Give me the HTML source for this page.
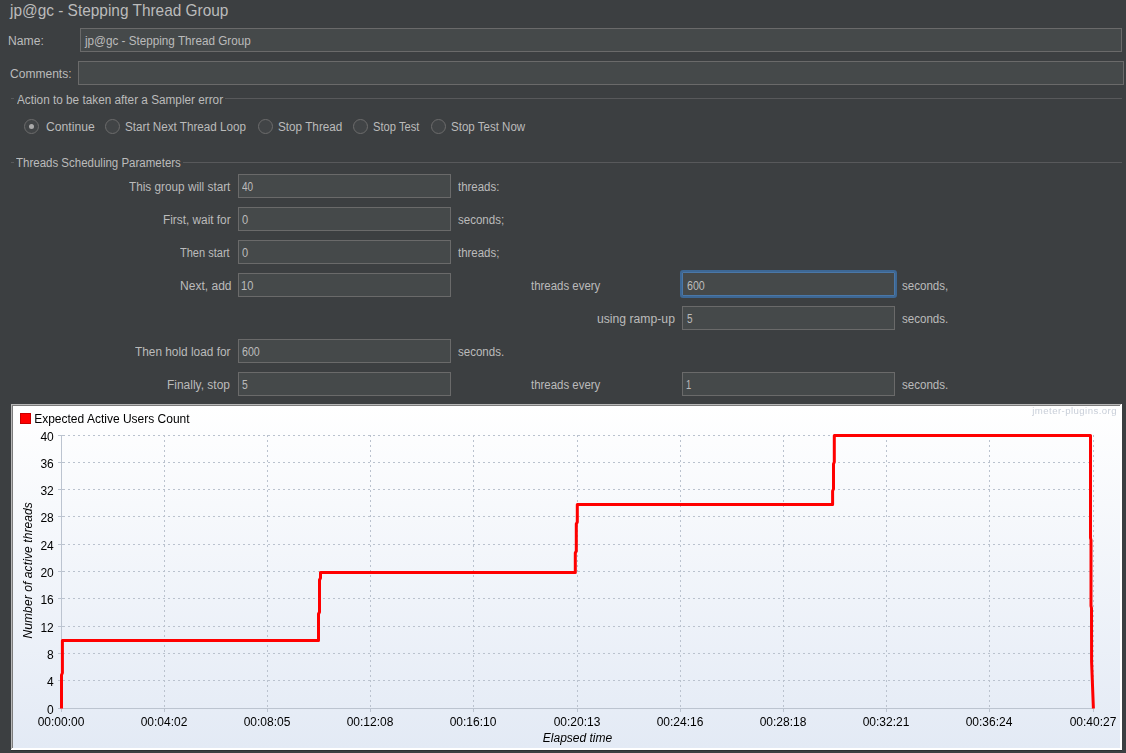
<!DOCTYPE html>
<html><head><meta charset="utf-8">
<style>
html,body{margin:0;padding:0}
body{width:1126px;height:753px;overflow:hidden;position:relative;background:#3c3f41;font-family:"Liberation Sans",sans-serif}
.t{position:absolute;white-space:pre;line-height:normal;transform-origin:0 0}
.fld{position:absolute;box-sizing:border-box;background:#45494a;border:1px solid #6a6a6a}
.foc{position:absolute;box-sizing:border-box;background:#45494a;border:2px solid #3d6794;box-shadow:inset 0 0 0 1px #4a77a7;border-radius:3px}
.ln{position:absolute;height:1px;background:#58595b}
.rad{position:absolute;box-sizing:border-box;width:15px;height:15px;border-radius:50%;border:1px solid #6c6c6c;background:#414446}
.dot{position:absolute;width:5px;height:5px;border-radius:50%;background:#ababab}
</style></head><body>
<div class="fld" style="left:80px;top:28px;width:1042px;height:24px"></div>
<div class="fld" style="left:78px;top:61px;width:1046px;height:24px"></div>
<div class="ln" style="left:11px;top:98px;width:3px"></div>
<div class="ln" style="left:225px;top:98px;width:897px"></div>
<div class="rad" style="left:24.1px;top:118.9px"></div>
<div class="dot" style="left:29.1px;top:123.9px"></div>
<div class="rad" style="left:105.0px;top:118.9px"></div>
<div class="rad" style="left:258.0px;top:118.9px"></div>
<div class="rad" style="left:352.7px;top:118.9px"></div>
<div class="rad" style="left:431.0px;top:118.9px"></div>
<div class="ln" style="left:11px;top:162px;width:3px"></div>
<div class="ln" style="left:183px;top:162px;width:939px"></div>
<div class="fld" style="left:238px;top:174px;width:213px;height:24px"></div>
<div class="fld" style="left:238px;top:207px;width:213px;height:24px"></div>
<div class="fld" style="left:238px;top:240px;width:213px;height:24px"></div>
<div class="fld" style="left:238px;top:273px;width:213px;height:24px"></div>
<div class="foc" style="left:680px;top:270px;width:217px;height:28px"></div>
<div class="fld" style="left:682px;top:306px;width:213px;height:24px"></div>
<div class="fld" style="left:238px;top:339px;width:213px;height:24px"></div>
<div class="fld" style="left:238px;top:372px;width:213px;height:24px"></div>
<div class="fld" style="left:682px;top:372px;width:213px;height:24px"></div>
<div class="t" style="left:9.77px;top:1.50px;font-size:15.9px;color:#bbbbbb;transform:scaleX(0.9699)">jp@gc - Stepping Thread Group</div>
<div class="t" style="left:8.43px;top:33.80px;font-size:12.5px;color:#bbbbbb;transform:scaleX(0.9714)">Name:</div>
<div class="t" style="left:85.14px;top:33.80px;font-size:12.5px;color:#bbbbbb;transform:scaleX(0.9354)">jp@gc - Stepping Thread Group</div>
<div class="t" style="left:9.60px;top:67.00px;font-size:12.5px;color:#bbbbbb;transform:scaleX(0.9635)">Comments:</div>
<div class="t" style="left:16.60px;top:92.50px;font-size:12.5px;color:#bbbbbb;transform:scaleX(0.9416)">Action to be taken after a Sampler error</div>
<div class="t" style="left:45.70px;top:120.20px;font-size:12.5px;color:#bbbbbb;transform:scaleX(0.9740)">Continue</div>
<div class="t" style="left:125.47px;top:120.20px;font-size:12.5px;color:#bbbbbb;transform:scaleX(0.9326)">Start Next Thread Loop</div>
<div class="t" style="left:278.06px;top:120.20px;font-size:12.5px;color:#bbbbbb;transform:scaleX(0.9388)">Stop Thread</div>
<div class="t" style="left:373.41px;top:120.20px;font-size:12.5px;color:#bbbbbb;transform:scaleX(0.8941)">Stop Test</div>
<div class="t" style="left:451.38px;top:120.20px;font-size:12.5px;color:#bbbbbb;transform:scaleX(0.9225)">Stop Test Now</div>
<div class="t" style="left:16.20px;top:156.00px;font-size:12.5px;color:#bbbbbb;transform:scaleX(0.9196)">Threads Scheduling Parameters</div>
<div class="t" style="left:128.90px;top:180.00px;font-size:12.5px;color:#bbbbbb;transform:scaleX(0.9417)">This group will start</div>
<div class="t" style="left:242.30px;top:180.00px;font-size:12.5px;color:#bbbbbb;transform:scaleX(0.8000)">40</div>
<div class="t" style="left:458.30px;top:180.00px;font-size:12.5px;color:#bbbbbb;transform:scaleX(0.9156)">threads:</div>
<div class="t" style="left:162.55px;top:213.00px;font-size:12.5px;color:#bbbbbb;transform:scaleX(0.9451)">First, wait for</div>
<div class="t" style="left:242.30px;top:213.00px;font-size:12.5px;color:#bbbbbb;transform:scaleX(0.8857)">0</div>
<div class="t" style="left:458.30px;top:213.00px;font-size:12.5px;color:#bbbbbb;transform:scaleX(0.9224)">seconds;</div>
<div class="t" style="left:180.30px;top:246.00px;font-size:12.5px;color:#bbbbbb;transform:scaleX(0.8825)">Then start</div>
<div class="t" style="left:242.30px;top:246.00px;font-size:12.5px;color:#bbbbbb;transform:scaleX(0.8857)">0</div>
<div class="t" style="left:458.30px;top:246.00px;font-size:12.5px;color:#bbbbbb;transform:scaleX(0.9156)">threads;</div>
<div class="t" style="left:179.54px;top:279.00px;font-size:12.5px;color:#bbbbbb;transform:scaleX(0.9635)">Next, add</div>
<div class="t" style="left:241.42px;top:279.00px;font-size:12.5px;color:#bbbbbb;transform:scaleX(0.8846)">10</div>
<div class="t" style="left:134.90px;top:345.00px;font-size:12.5px;color:#bbbbbb;transform:scaleX(0.9475)">Then hold load for</div>
<div class="t" style="left:242.30px;top:345.00px;font-size:12.5px;color:#bbbbbb;transform:scaleX(0.8524)">600</div>
<div class="t" style="left:458.30px;top:345.00px;font-size:12.5px;color:#bbbbbb;transform:scaleX(0.9224)">seconds.</div>
<div class="t" style="left:167.44px;top:378.00px;font-size:12.5px;color:#bbbbbb;transform:scaleX(0.9569)">Finally, stop</div>
<div class="t" style="left:242.30px;top:378.00px;font-size:12.5px;color:#bbbbbb;transform:scaleX(0.8286)">5</div>
<div class="t" style="left:531.30px;top:279.00px;font-size:12.5px;color:#bbbbbb;transform:scaleX(0.9145)">threads every</div>
<div class="t" style="left:686.70px;top:279.00px;font-size:12.5px;color:#bbbbbb;transform:scaleX(0.8524)">600</div>
<div class="t" style="left:902.20px;top:279.00px;font-size:12.5px;color:#bbbbbb;transform:scaleX(0.9245)">seconds,</div>
<div class="t" style="left:596.50px;top:312.00px;font-size:12.5px;color:#bbbbbb;transform:scaleX(0.9750)">using ramp-up</div>
<div class="t" style="left:686.90px;top:312.00px;font-size:12.5px;color:#bbbbbb;transform:scaleX(0.8000)">5</div>
<div class="t" style="left:902.20px;top:312.00px;font-size:12.5px;color:#bbbbbb;transform:scaleX(0.9245)">seconds.</div>
<div class="t" style="left:531.30px;top:378.00px;font-size:12.5px;color:#bbbbbb;transform:scaleX(0.9145)">threads every</div>
<div class="t" style="left:686.25px;top:378.00px;font-size:12.5px;color:#bbbbbb;transform:scaleX(0.7500)">1</div>
<div class="t" style="left:902.20px;top:378.00px;font-size:12.5px;color:#bbbbbb;transform:scaleX(0.9245)">seconds.</div>
<svg style="position:absolute;left:0;top:0;will-change:transform" width="1126" height="753" viewBox="0 0 1126 753">
<defs><linearGradient id="bg" x1="0" y1="0" x2="0" y2="1">
<stop offset="0" stop-color="#ffffff"/><stop offset="1" stop-color="#e3eaf5"/></linearGradient></defs>
<rect x="11" y="404" width="1111" height="346" fill="#ffffff"/>
<rect x="11" y="404" width="1110" height="1" fill="#b8b8b8"/>
<rect x="11" y="404" width="1" height="345" fill="#b8b8b8"/>
<rect x="12" y="405" width="1108" height="1" fill="#7c7c7c"/>
<rect x="12" y="405" width="1" height="343" fill="#7c7c7c"/>
<rect x="13" y="406" width="1107" height="342" fill="url(#bg)"/>
<rect x="11" y="750" width="1111" height="1" fill="#2e3133"/>
<rect x="20.5" y="413.5" width="10" height="10" fill="#ff0000" stroke="#c80000" stroke-width="1"/>
<text x="34.2" y="423" font-family="Liberation Sans" font-size="12" fill="#000">Expected Active Users Count</text>
<text x="1117" y="414" text-anchor="end" font-family="Liberation Sans" font-size="9.6" letter-spacing="0.44" fill="#c9cfd9">jmeter-plugins.org</text>
<path fill="#bac2ce" d="M63 435h2v1h-2zM68 435h2v1h-2zM73 435h2v1h-2zM78 435h2v1h-2zM83 435h2v1h-2zM88 435h2v1h-2zM93 435h2v1h-2zM98 435h2v1h-2zM103 435h2v1h-2zM108 435h2v1h-2zM113 435h2v1h-2zM118 435h2v1h-2zM123 435h2v1h-2zM128 435h2v1h-2zM133 435h2v1h-2zM138 435h2v1h-2zM143 435h2v1h-2zM148 435h2v1h-2zM153 435h2v1h-2zM158 435h2v1h-2zM163 435h2v1h-2zM168 435h2v1h-2zM173 435h2v1h-2zM178 435h2v1h-2zM183 435h2v1h-2zM188 435h2v1h-2zM193 435h2v1h-2zM198 435h2v1h-2zM203 435h2v1h-2zM208 435h2v1h-2zM213 435h2v1h-2zM218 435h2v1h-2zM223 435h2v1h-2zM228 435h2v1h-2zM233 435h2v1h-2zM238 435h2v1h-2zM243 435h2v1h-2zM248 435h2v1h-2zM253 435h2v1h-2zM258 435h2v1h-2zM263 435h2v1h-2zM268 435h2v1h-2zM273 435h2v1h-2zM278 435h2v1h-2zM283 435h2v1h-2zM288 435h2v1h-2zM293 435h2v1h-2zM298 435h2v1h-2zM303 435h2v1h-2zM308 435h2v1h-2zM313 435h2v1h-2zM318 435h2v1h-2zM323 435h2v1h-2zM328 435h2v1h-2zM333 435h2v1h-2zM338 435h2v1h-2zM343 435h2v1h-2zM348 435h2v1h-2zM353 435h2v1h-2zM358 435h2v1h-2zM363 435h2v1h-2zM368 435h2v1h-2zM373 435h2v1h-2zM378 435h2v1h-2zM383 435h2v1h-2zM388 435h2v1h-2zM393 435h2v1h-2zM398 435h2v1h-2zM403 435h2v1h-2zM408 435h2v1h-2zM413 435h2v1h-2zM418 435h2v1h-2zM423 435h2v1h-2zM428 435h2v1h-2zM433 435h2v1h-2zM438 435h2v1h-2zM443 435h2v1h-2zM448 435h2v1h-2zM453 435h2v1h-2zM458 435h2v1h-2zM463 435h2v1h-2zM468 435h2v1h-2zM473 435h2v1h-2zM478 435h2v1h-2zM483 435h2v1h-2zM488 435h2v1h-2zM493 435h2v1h-2zM498 435h2v1h-2zM503 435h2v1h-2zM508 435h2v1h-2zM513 435h2v1h-2zM518 435h2v1h-2zM523 435h2v1h-2zM528 435h2v1h-2zM533 435h2v1h-2zM538 435h2v1h-2zM543 435h2v1h-2zM548 435h2v1h-2zM553 435h2v1h-2zM558 435h2v1h-2zM563 435h2v1h-2zM568 435h2v1h-2zM573 435h2v1h-2zM578 435h2v1h-2zM583 435h2v1h-2zM588 435h2v1h-2zM593 435h2v1h-2zM598 435h2v1h-2zM603 435h2v1h-2zM608 435h2v1h-2zM613 435h2v1h-2zM618 435h2v1h-2zM623 435h2v1h-2zM628 435h2v1h-2zM633 435h2v1h-2zM638 435h2v1h-2zM643 435h2v1h-2zM648 435h2v1h-2zM653 435h2v1h-2zM658 435h2v1h-2zM663 435h2v1h-2zM668 435h2v1h-2zM673 435h2v1h-2zM678 435h2v1h-2zM683 435h2v1h-2zM688 435h2v1h-2zM693 435h2v1h-2zM698 435h2v1h-2zM703 435h2v1h-2zM708 435h2v1h-2zM713 435h2v1h-2zM718 435h2v1h-2zM723 435h2v1h-2zM728 435h2v1h-2zM733 435h2v1h-2zM738 435h2v1h-2zM743 435h2v1h-2zM748 435h2v1h-2zM753 435h2v1h-2zM758 435h2v1h-2zM763 435h2v1h-2zM768 435h2v1h-2zM773 435h2v1h-2zM778 435h2v1h-2zM783 435h2v1h-2zM788 435h2v1h-2zM793 435h2v1h-2zM798 435h2v1h-2zM803 435h2v1h-2zM808 435h2v1h-2zM813 435h2v1h-2zM818 435h2v1h-2zM823 435h2v1h-2zM828 435h2v1h-2zM833 435h2v1h-2zM838 435h2v1h-2zM843 435h2v1h-2zM848 435h2v1h-2zM853 435h2v1h-2zM858 435h2v1h-2zM863 435h2v1h-2zM868 435h2v1h-2zM873 435h2v1h-2zM878 435h2v1h-2zM883 435h2v1h-2zM888 435h2v1h-2zM893 435h2v1h-2zM898 435h2v1h-2zM903 435h2v1h-2zM908 435h2v1h-2zM913 435h2v1h-2zM918 435h2v1h-2zM923 435h2v1h-2zM928 435h2v1h-2zM933 435h2v1h-2zM938 435h2v1h-2zM943 435h2v1h-2zM948 435h2v1h-2zM953 435h2v1h-2zM958 435h2v1h-2zM963 435h2v1h-2zM968 435h2v1h-2zM973 435h2v1h-2zM978 435h2v1h-2zM983 435h2v1h-2zM988 435h2v1h-2zM993 435h2v1h-2zM998 435h2v1h-2zM1003 435h2v1h-2zM1008 435h2v1h-2zM1013 435h2v1h-2zM1018 435h2v1h-2zM1023 435h2v1h-2zM1028 435h2v1h-2zM1033 435h2v1h-2zM1038 435h2v1h-2zM1043 435h2v1h-2zM1048 435h2v1h-2zM1053 435h2v1h-2zM1058 435h2v1h-2zM1063 435h2v1h-2zM1068 435h2v1h-2zM1073 435h2v1h-2zM1078 435h2v1h-2zM1083 435h2v1h-2zM1088 435h2v1h-2zM63 462h2v1h-2zM68 462h2v1h-2zM73 462h2v1h-2zM78 462h2v1h-2zM83 462h2v1h-2zM88 462h2v1h-2zM93 462h2v1h-2zM98 462h2v1h-2zM103 462h2v1h-2zM108 462h2v1h-2zM113 462h2v1h-2zM118 462h2v1h-2zM123 462h2v1h-2zM128 462h2v1h-2zM133 462h2v1h-2zM138 462h2v1h-2zM143 462h2v1h-2zM148 462h2v1h-2zM153 462h2v1h-2zM158 462h2v1h-2zM163 462h2v1h-2zM168 462h2v1h-2zM173 462h2v1h-2zM178 462h2v1h-2zM183 462h2v1h-2zM188 462h2v1h-2zM193 462h2v1h-2zM198 462h2v1h-2zM203 462h2v1h-2zM208 462h2v1h-2zM213 462h2v1h-2zM218 462h2v1h-2zM223 462h2v1h-2zM228 462h2v1h-2zM233 462h2v1h-2zM238 462h2v1h-2zM243 462h2v1h-2zM248 462h2v1h-2zM253 462h2v1h-2zM258 462h2v1h-2zM263 462h2v1h-2zM268 462h2v1h-2zM273 462h2v1h-2zM278 462h2v1h-2zM283 462h2v1h-2zM288 462h2v1h-2zM293 462h2v1h-2zM298 462h2v1h-2zM303 462h2v1h-2zM308 462h2v1h-2zM313 462h2v1h-2zM318 462h2v1h-2zM323 462h2v1h-2zM328 462h2v1h-2zM333 462h2v1h-2zM338 462h2v1h-2zM343 462h2v1h-2zM348 462h2v1h-2zM353 462h2v1h-2zM358 462h2v1h-2zM363 462h2v1h-2zM368 462h2v1h-2zM373 462h2v1h-2zM378 462h2v1h-2zM383 462h2v1h-2zM388 462h2v1h-2zM393 462h2v1h-2zM398 462h2v1h-2zM403 462h2v1h-2zM408 462h2v1h-2zM413 462h2v1h-2zM418 462h2v1h-2zM423 462h2v1h-2zM428 462h2v1h-2zM433 462h2v1h-2zM438 462h2v1h-2zM443 462h2v1h-2zM448 462h2v1h-2zM453 462h2v1h-2zM458 462h2v1h-2zM463 462h2v1h-2zM468 462h2v1h-2zM473 462h2v1h-2zM478 462h2v1h-2zM483 462h2v1h-2zM488 462h2v1h-2zM493 462h2v1h-2zM498 462h2v1h-2zM503 462h2v1h-2zM508 462h2v1h-2zM513 462h2v1h-2zM518 462h2v1h-2zM523 462h2v1h-2zM528 462h2v1h-2zM533 462h2v1h-2zM538 462h2v1h-2zM543 462h2v1h-2zM548 462h2v1h-2zM553 462h2v1h-2zM558 462h2v1h-2zM563 462h2v1h-2zM568 462h2v1h-2zM573 462h2v1h-2zM578 462h2v1h-2zM583 462h2v1h-2zM588 462h2v1h-2zM593 462h2v1h-2zM598 462h2v1h-2zM603 462h2v1h-2zM608 462h2v1h-2zM613 462h2v1h-2zM618 462h2v1h-2zM623 462h2v1h-2zM628 462h2v1h-2zM633 462h2v1h-2zM638 462h2v1h-2zM643 462h2v1h-2zM648 462h2v1h-2zM653 462h2v1h-2zM658 462h2v1h-2zM663 462h2v1h-2zM668 462h2v1h-2zM673 462h2v1h-2zM678 462h2v1h-2zM683 462h2v1h-2zM688 462h2v1h-2zM693 462h2v1h-2zM698 462h2v1h-2zM703 462h2v1h-2zM708 462h2v1h-2zM713 462h2v1h-2zM718 462h2v1h-2zM723 462h2v1h-2zM728 462h2v1h-2zM733 462h2v1h-2zM738 462h2v1h-2zM743 462h2v1h-2zM748 462h2v1h-2zM753 462h2v1h-2zM758 462h2v1h-2zM763 462h2v1h-2zM768 462h2v1h-2zM773 462h2v1h-2zM778 462h2v1h-2zM783 462h2v1h-2zM788 462h2v1h-2zM793 462h2v1h-2zM798 462h2v1h-2zM803 462h2v1h-2zM808 462h2v1h-2zM813 462h2v1h-2zM818 462h2v1h-2zM823 462h2v1h-2zM828 462h2v1h-2zM833 462h2v1h-2zM838 462h2v1h-2zM843 462h2v1h-2zM848 462h2v1h-2zM853 462h2v1h-2zM858 462h2v1h-2zM863 462h2v1h-2zM868 462h2v1h-2zM873 462h2v1h-2zM878 462h2v1h-2zM883 462h2v1h-2zM888 462h2v1h-2zM893 462h2v1h-2zM898 462h2v1h-2zM903 462h2v1h-2zM908 462h2v1h-2zM913 462h2v1h-2zM918 462h2v1h-2zM923 462h2v1h-2zM928 462h2v1h-2zM933 462h2v1h-2zM938 462h2v1h-2zM943 462h2v1h-2zM948 462h2v1h-2zM953 462h2v1h-2zM958 462h2v1h-2zM963 462h2v1h-2zM968 462h2v1h-2zM973 462h2v1h-2zM978 462h2v1h-2zM983 462h2v1h-2zM988 462h2v1h-2zM993 462h2v1h-2zM998 462h2v1h-2zM1003 462h2v1h-2zM1008 462h2v1h-2zM1013 462h2v1h-2zM1018 462h2v1h-2zM1023 462h2v1h-2zM1028 462h2v1h-2zM1033 462h2v1h-2zM1038 462h2v1h-2zM1043 462h2v1h-2zM1048 462h2v1h-2zM1053 462h2v1h-2zM1058 462h2v1h-2zM1063 462h2v1h-2zM1068 462h2v1h-2zM1073 462h2v1h-2zM1078 462h2v1h-2zM1083 462h2v1h-2zM1088 462h2v1h-2zM63 489h2v1h-2zM68 489h2v1h-2zM73 489h2v1h-2zM78 489h2v1h-2zM83 489h2v1h-2zM88 489h2v1h-2zM93 489h2v1h-2zM98 489h2v1h-2zM103 489h2v1h-2zM108 489h2v1h-2zM113 489h2v1h-2zM118 489h2v1h-2zM123 489h2v1h-2zM128 489h2v1h-2zM133 489h2v1h-2zM138 489h2v1h-2zM143 489h2v1h-2zM148 489h2v1h-2zM153 489h2v1h-2zM158 489h2v1h-2zM163 489h2v1h-2zM168 489h2v1h-2zM173 489h2v1h-2zM178 489h2v1h-2zM183 489h2v1h-2zM188 489h2v1h-2zM193 489h2v1h-2zM198 489h2v1h-2zM203 489h2v1h-2zM208 489h2v1h-2zM213 489h2v1h-2zM218 489h2v1h-2zM223 489h2v1h-2zM228 489h2v1h-2zM233 489h2v1h-2zM238 489h2v1h-2zM243 489h2v1h-2zM248 489h2v1h-2zM253 489h2v1h-2zM258 489h2v1h-2zM263 489h2v1h-2zM268 489h2v1h-2zM273 489h2v1h-2zM278 489h2v1h-2zM283 489h2v1h-2zM288 489h2v1h-2zM293 489h2v1h-2zM298 489h2v1h-2zM303 489h2v1h-2zM308 489h2v1h-2zM313 489h2v1h-2zM318 489h2v1h-2zM323 489h2v1h-2zM328 489h2v1h-2zM333 489h2v1h-2zM338 489h2v1h-2zM343 489h2v1h-2zM348 489h2v1h-2zM353 489h2v1h-2zM358 489h2v1h-2zM363 489h2v1h-2zM368 489h2v1h-2zM373 489h2v1h-2zM378 489h2v1h-2zM383 489h2v1h-2zM388 489h2v1h-2zM393 489h2v1h-2zM398 489h2v1h-2zM403 489h2v1h-2zM408 489h2v1h-2zM413 489h2v1h-2zM418 489h2v1h-2zM423 489h2v1h-2zM428 489h2v1h-2zM433 489h2v1h-2zM438 489h2v1h-2zM443 489h2v1h-2zM448 489h2v1h-2zM453 489h2v1h-2zM458 489h2v1h-2zM463 489h2v1h-2zM468 489h2v1h-2zM473 489h2v1h-2zM478 489h2v1h-2zM483 489h2v1h-2zM488 489h2v1h-2zM493 489h2v1h-2zM498 489h2v1h-2zM503 489h2v1h-2zM508 489h2v1h-2zM513 489h2v1h-2zM518 489h2v1h-2zM523 489h2v1h-2zM528 489h2v1h-2zM533 489h2v1h-2zM538 489h2v1h-2zM543 489h2v1h-2zM548 489h2v1h-2zM553 489h2v1h-2zM558 489h2v1h-2zM563 489h2v1h-2zM568 489h2v1h-2zM573 489h2v1h-2zM578 489h2v1h-2zM583 489h2v1h-2zM588 489h2v1h-2zM593 489h2v1h-2zM598 489h2v1h-2zM603 489h2v1h-2zM608 489h2v1h-2zM613 489h2v1h-2zM618 489h2v1h-2zM623 489h2v1h-2zM628 489h2v1h-2zM633 489h2v1h-2zM638 489h2v1h-2zM643 489h2v1h-2zM648 489h2v1h-2zM653 489h2v1h-2zM658 489h2v1h-2zM663 489h2v1h-2zM668 489h2v1h-2zM673 489h2v1h-2zM678 489h2v1h-2zM683 489h2v1h-2zM688 489h2v1h-2zM693 489h2v1h-2zM698 489h2v1h-2zM703 489h2v1h-2zM708 489h2v1h-2zM713 489h2v1h-2zM718 489h2v1h-2zM723 489h2v1h-2zM728 489h2v1h-2zM733 489h2v1h-2zM738 489h2v1h-2zM743 489h2v1h-2zM748 489h2v1h-2zM753 489h2v1h-2zM758 489h2v1h-2zM763 489h2v1h-2zM768 489h2v1h-2zM773 489h2v1h-2zM778 489h2v1h-2zM783 489h2v1h-2zM788 489h2v1h-2zM793 489h2v1h-2zM798 489h2v1h-2zM803 489h2v1h-2zM808 489h2v1h-2zM813 489h2v1h-2zM818 489h2v1h-2zM823 489h2v1h-2zM828 489h2v1h-2zM833 489h2v1h-2zM838 489h2v1h-2zM843 489h2v1h-2zM848 489h2v1h-2zM853 489h2v1h-2zM858 489h2v1h-2zM863 489h2v1h-2zM868 489h2v1h-2zM873 489h2v1h-2zM878 489h2v1h-2zM883 489h2v1h-2zM888 489h2v1h-2zM893 489h2v1h-2zM898 489h2v1h-2zM903 489h2v1h-2zM908 489h2v1h-2zM913 489h2v1h-2zM918 489h2v1h-2zM923 489h2v1h-2zM928 489h2v1h-2zM933 489h2v1h-2zM938 489h2v1h-2zM943 489h2v1h-2zM948 489h2v1h-2zM953 489h2v1h-2zM958 489h2v1h-2zM963 489h2v1h-2zM968 489h2v1h-2zM973 489h2v1h-2zM978 489h2v1h-2zM983 489h2v1h-2zM988 489h2v1h-2zM993 489h2v1h-2zM998 489h2v1h-2zM1003 489h2v1h-2zM1008 489h2v1h-2zM1013 489h2v1h-2zM1018 489h2v1h-2zM1023 489h2v1h-2zM1028 489h2v1h-2zM1033 489h2v1h-2zM1038 489h2v1h-2zM1043 489h2v1h-2zM1048 489h2v1h-2zM1053 489h2v1h-2zM1058 489h2v1h-2zM1063 489h2v1h-2zM1068 489h2v1h-2zM1073 489h2v1h-2zM1078 489h2v1h-2zM1083 489h2v1h-2zM1088 489h2v1h-2zM63 516h2v1h-2zM68 516h2v1h-2zM73 516h2v1h-2zM78 516h2v1h-2zM83 516h2v1h-2zM88 516h2v1h-2zM93 516h2v1h-2zM98 516h2v1h-2zM103 516h2v1h-2zM108 516h2v1h-2zM113 516h2v1h-2zM118 516h2v1h-2zM123 516h2v1h-2zM128 516h2v1h-2zM133 516h2v1h-2zM138 516h2v1h-2zM143 516h2v1h-2zM148 516h2v1h-2zM153 516h2v1h-2zM158 516h2v1h-2zM163 516h2v1h-2zM168 516h2v1h-2zM173 516h2v1h-2zM178 516h2v1h-2zM183 516h2v1h-2zM188 516h2v1h-2zM193 516h2v1h-2zM198 516h2v1h-2zM203 516h2v1h-2zM208 516h2v1h-2zM213 516h2v1h-2zM218 516h2v1h-2zM223 516h2v1h-2zM228 516h2v1h-2zM233 516h2v1h-2zM238 516h2v1h-2zM243 516h2v1h-2zM248 516h2v1h-2zM253 516h2v1h-2zM258 516h2v1h-2zM263 516h2v1h-2zM268 516h2v1h-2zM273 516h2v1h-2zM278 516h2v1h-2zM283 516h2v1h-2zM288 516h2v1h-2zM293 516h2v1h-2zM298 516h2v1h-2zM303 516h2v1h-2zM308 516h2v1h-2zM313 516h2v1h-2zM318 516h2v1h-2zM323 516h2v1h-2zM328 516h2v1h-2zM333 516h2v1h-2zM338 516h2v1h-2zM343 516h2v1h-2zM348 516h2v1h-2zM353 516h2v1h-2zM358 516h2v1h-2zM363 516h2v1h-2zM368 516h2v1h-2zM373 516h2v1h-2zM378 516h2v1h-2zM383 516h2v1h-2zM388 516h2v1h-2zM393 516h2v1h-2zM398 516h2v1h-2zM403 516h2v1h-2zM408 516h2v1h-2zM413 516h2v1h-2zM418 516h2v1h-2zM423 516h2v1h-2zM428 516h2v1h-2zM433 516h2v1h-2zM438 516h2v1h-2zM443 516h2v1h-2zM448 516h2v1h-2zM453 516h2v1h-2zM458 516h2v1h-2zM463 516h2v1h-2zM468 516h2v1h-2zM473 516h2v1h-2zM478 516h2v1h-2zM483 516h2v1h-2zM488 516h2v1h-2zM493 516h2v1h-2zM498 516h2v1h-2zM503 516h2v1h-2zM508 516h2v1h-2zM513 516h2v1h-2zM518 516h2v1h-2zM523 516h2v1h-2zM528 516h2v1h-2zM533 516h2v1h-2zM538 516h2v1h-2zM543 516h2v1h-2zM548 516h2v1h-2zM553 516h2v1h-2zM558 516h2v1h-2zM563 516h2v1h-2zM568 516h2v1h-2zM573 516h2v1h-2zM578 516h2v1h-2zM583 516h2v1h-2zM588 516h2v1h-2zM593 516h2v1h-2zM598 516h2v1h-2zM603 516h2v1h-2zM608 516h2v1h-2zM613 516h2v1h-2zM618 516h2v1h-2zM623 516h2v1h-2zM628 516h2v1h-2zM633 516h2v1h-2zM638 516h2v1h-2zM643 516h2v1h-2zM648 516h2v1h-2zM653 516h2v1h-2zM658 516h2v1h-2zM663 516h2v1h-2zM668 516h2v1h-2zM673 516h2v1h-2zM678 516h2v1h-2zM683 516h2v1h-2zM688 516h2v1h-2zM693 516h2v1h-2zM698 516h2v1h-2zM703 516h2v1h-2zM708 516h2v1h-2zM713 516h2v1h-2zM718 516h2v1h-2zM723 516h2v1h-2zM728 516h2v1h-2zM733 516h2v1h-2zM738 516h2v1h-2zM743 516h2v1h-2zM748 516h2v1h-2zM753 516h2v1h-2zM758 516h2v1h-2zM763 516h2v1h-2zM768 516h2v1h-2zM773 516h2v1h-2zM778 516h2v1h-2zM783 516h2v1h-2zM788 516h2v1h-2zM793 516h2v1h-2zM798 516h2v1h-2zM803 516h2v1h-2zM808 516h2v1h-2zM813 516h2v1h-2zM818 516h2v1h-2zM823 516h2v1h-2zM828 516h2v1h-2zM833 516h2v1h-2zM838 516h2v1h-2zM843 516h2v1h-2zM848 516h2v1h-2zM853 516h2v1h-2zM858 516h2v1h-2zM863 516h2v1h-2zM868 516h2v1h-2zM873 516h2v1h-2zM878 516h2v1h-2zM883 516h2v1h-2zM888 516h2v1h-2zM893 516h2v1h-2zM898 516h2v1h-2zM903 516h2v1h-2zM908 516h2v1h-2zM913 516h2v1h-2zM918 516h2v1h-2zM923 516h2v1h-2zM928 516h2v1h-2zM933 516h2v1h-2zM938 516h2v1h-2zM943 516h2v1h-2zM948 516h2v1h-2zM953 516h2v1h-2zM958 516h2v1h-2zM963 516h2v1h-2zM968 516h2v1h-2zM973 516h2v1h-2zM978 516h2v1h-2zM983 516h2v1h-2zM988 516h2v1h-2zM993 516h2v1h-2zM998 516h2v1h-2zM1003 516h2v1h-2zM1008 516h2v1h-2zM1013 516h2v1h-2zM1018 516h2v1h-2zM1023 516h2v1h-2zM1028 516h2v1h-2zM1033 516h2v1h-2zM1038 516h2v1h-2zM1043 516h2v1h-2zM1048 516h2v1h-2zM1053 516h2v1h-2zM1058 516h2v1h-2zM1063 516h2v1h-2zM1068 516h2v1h-2zM1073 516h2v1h-2zM1078 516h2v1h-2zM1083 516h2v1h-2zM1088 516h2v1h-2zM63 544h2v1h-2zM68 544h2v1h-2zM73 544h2v1h-2zM78 544h2v1h-2zM83 544h2v1h-2zM88 544h2v1h-2zM93 544h2v1h-2zM98 544h2v1h-2zM103 544h2v1h-2zM108 544h2v1h-2zM113 544h2v1h-2zM118 544h2v1h-2zM123 544h2v1h-2zM128 544h2v1h-2zM133 544h2v1h-2zM138 544h2v1h-2zM143 544h2v1h-2zM148 544h2v1h-2zM153 544h2v1h-2zM158 544h2v1h-2zM163 544h2v1h-2zM168 544h2v1h-2zM173 544h2v1h-2zM178 544h2v1h-2zM183 544h2v1h-2zM188 544h2v1h-2zM193 544h2v1h-2zM198 544h2v1h-2zM203 544h2v1h-2zM208 544h2v1h-2zM213 544h2v1h-2zM218 544h2v1h-2zM223 544h2v1h-2zM228 544h2v1h-2zM233 544h2v1h-2zM238 544h2v1h-2zM243 544h2v1h-2zM248 544h2v1h-2zM253 544h2v1h-2zM258 544h2v1h-2zM263 544h2v1h-2zM268 544h2v1h-2zM273 544h2v1h-2zM278 544h2v1h-2zM283 544h2v1h-2zM288 544h2v1h-2zM293 544h2v1h-2zM298 544h2v1h-2zM303 544h2v1h-2zM308 544h2v1h-2zM313 544h2v1h-2zM318 544h2v1h-2zM323 544h2v1h-2zM328 544h2v1h-2zM333 544h2v1h-2zM338 544h2v1h-2zM343 544h2v1h-2zM348 544h2v1h-2zM353 544h2v1h-2zM358 544h2v1h-2zM363 544h2v1h-2zM368 544h2v1h-2zM373 544h2v1h-2zM378 544h2v1h-2zM383 544h2v1h-2zM388 544h2v1h-2zM393 544h2v1h-2zM398 544h2v1h-2zM403 544h2v1h-2zM408 544h2v1h-2zM413 544h2v1h-2zM418 544h2v1h-2zM423 544h2v1h-2zM428 544h2v1h-2zM433 544h2v1h-2zM438 544h2v1h-2zM443 544h2v1h-2zM448 544h2v1h-2zM453 544h2v1h-2zM458 544h2v1h-2zM463 544h2v1h-2zM468 544h2v1h-2zM473 544h2v1h-2zM478 544h2v1h-2zM483 544h2v1h-2zM488 544h2v1h-2zM493 544h2v1h-2zM498 544h2v1h-2zM503 544h2v1h-2zM508 544h2v1h-2zM513 544h2v1h-2zM518 544h2v1h-2zM523 544h2v1h-2zM528 544h2v1h-2zM533 544h2v1h-2zM538 544h2v1h-2zM543 544h2v1h-2zM548 544h2v1h-2zM553 544h2v1h-2zM558 544h2v1h-2zM563 544h2v1h-2zM568 544h2v1h-2zM573 544h2v1h-2zM578 544h2v1h-2zM583 544h2v1h-2zM588 544h2v1h-2zM593 544h2v1h-2zM598 544h2v1h-2zM603 544h2v1h-2zM608 544h2v1h-2zM613 544h2v1h-2zM618 544h2v1h-2zM623 544h2v1h-2zM628 544h2v1h-2zM633 544h2v1h-2zM638 544h2v1h-2zM643 544h2v1h-2zM648 544h2v1h-2zM653 544h2v1h-2zM658 544h2v1h-2zM663 544h2v1h-2zM668 544h2v1h-2zM673 544h2v1h-2zM678 544h2v1h-2zM683 544h2v1h-2zM688 544h2v1h-2zM693 544h2v1h-2zM698 544h2v1h-2zM703 544h2v1h-2zM708 544h2v1h-2zM713 544h2v1h-2zM718 544h2v1h-2zM723 544h2v1h-2zM728 544h2v1h-2zM733 544h2v1h-2zM738 544h2v1h-2zM743 544h2v1h-2zM748 544h2v1h-2zM753 544h2v1h-2zM758 544h2v1h-2zM763 544h2v1h-2zM768 544h2v1h-2zM773 544h2v1h-2zM778 544h2v1h-2zM783 544h2v1h-2zM788 544h2v1h-2zM793 544h2v1h-2zM798 544h2v1h-2zM803 544h2v1h-2zM808 544h2v1h-2zM813 544h2v1h-2zM818 544h2v1h-2zM823 544h2v1h-2zM828 544h2v1h-2zM833 544h2v1h-2zM838 544h2v1h-2zM843 544h2v1h-2zM848 544h2v1h-2zM853 544h2v1h-2zM858 544h2v1h-2zM863 544h2v1h-2zM868 544h2v1h-2zM873 544h2v1h-2zM878 544h2v1h-2zM883 544h2v1h-2zM888 544h2v1h-2zM893 544h2v1h-2zM898 544h2v1h-2zM903 544h2v1h-2zM908 544h2v1h-2zM913 544h2v1h-2zM918 544h2v1h-2zM923 544h2v1h-2zM928 544h2v1h-2zM933 544h2v1h-2zM938 544h2v1h-2zM943 544h2v1h-2zM948 544h2v1h-2zM953 544h2v1h-2zM958 544h2v1h-2zM963 544h2v1h-2zM968 544h2v1h-2zM973 544h2v1h-2zM978 544h2v1h-2zM983 544h2v1h-2zM988 544h2v1h-2zM993 544h2v1h-2zM998 544h2v1h-2zM1003 544h2v1h-2zM1008 544h2v1h-2zM1013 544h2v1h-2zM1018 544h2v1h-2zM1023 544h2v1h-2zM1028 544h2v1h-2zM1033 544h2v1h-2zM1038 544h2v1h-2zM1043 544h2v1h-2zM1048 544h2v1h-2zM1053 544h2v1h-2zM1058 544h2v1h-2zM1063 544h2v1h-2zM1068 544h2v1h-2zM1073 544h2v1h-2zM1078 544h2v1h-2zM1083 544h2v1h-2zM1088 544h2v1h-2zM63 571h2v1h-2zM68 571h2v1h-2zM73 571h2v1h-2zM78 571h2v1h-2zM83 571h2v1h-2zM88 571h2v1h-2zM93 571h2v1h-2zM98 571h2v1h-2zM103 571h2v1h-2zM108 571h2v1h-2zM113 571h2v1h-2zM118 571h2v1h-2zM123 571h2v1h-2zM128 571h2v1h-2zM133 571h2v1h-2zM138 571h2v1h-2zM143 571h2v1h-2zM148 571h2v1h-2zM153 571h2v1h-2zM158 571h2v1h-2zM163 571h2v1h-2zM168 571h2v1h-2zM173 571h2v1h-2zM178 571h2v1h-2zM183 571h2v1h-2zM188 571h2v1h-2zM193 571h2v1h-2zM198 571h2v1h-2zM203 571h2v1h-2zM208 571h2v1h-2zM213 571h2v1h-2zM218 571h2v1h-2zM223 571h2v1h-2zM228 571h2v1h-2zM233 571h2v1h-2zM238 571h2v1h-2zM243 571h2v1h-2zM248 571h2v1h-2zM253 571h2v1h-2zM258 571h2v1h-2zM263 571h2v1h-2zM268 571h2v1h-2zM273 571h2v1h-2zM278 571h2v1h-2zM283 571h2v1h-2zM288 571h2v1h-2zM293 571h2v1h-2zM298 571h2v1h-2zM303 571h2v1h-2zM308 571h2v1h-2zM313 571h2v1h-2zM318 571h2v1h-2zM323 571h2v1h-2zM328 571h2v1h-2zM333 571h2v1h-2zM338 571h2v1h-2zM343 571h2v1h-2zM348 571h2v1h-2zM353 571h2v1h-2zM358 571h2v1h-2zM363 571h2v1h-2zM368 571h2v1h-2zM373 571h2v1h-2zM378 571h2v1h-2zM383 571h2v1h-2zM388 571h2v1h-2zM393 571h2v1h-2zM398 571h2v1h-2zM403 571h2v1h-2zM408 571h2v1h-2zM413 571h2v1h-2zM418 571h2v1h-2zM423 571h2v1h-2zM428 571h2v1h-2zM433 571h2v1h-2zM438 571h2v1h-2zM443 571h2v1h-2zM448 571h2v1h-2zM453 571h2v1h-2zM458 571h2v1h-2zM463 571h2v1h-2zM468 571h2v1h-2zM473 571h2v1h-2zM478 571h2v1h-2zM483 571h2v1h-2zM488 571h2v1h-2zM493 571h2v1h-2zM498 571h2v1h-2zM503 571h2v1h-2zM508 571h2v1h-2zM513 571h2v1h-2zM518 571h2v1h-2zM523 571h2v1h-2zM528 571h2v1h-2zM533 571h2v1h-2zM538 571h2v1h-2zM543 571h2v1h-2zM548 571h2v1h-2zM553 571h2v1h-2zM558 571h2v1h-2zM563 571h2v1h-2zM568 571h2v1h-2zM573 571h2v1h-2zM578 571h2v1h-2zM583 571h2v1h-2zM588 571h2v1h-2zM593 571h2v1h-2zM598 571h2v1h-2zM603 571h2v1h-2zM608 571h2v1h-2zM613 571h2v1h-2zM618 571h2v1h-2zM623 571h2v1h-2zM628 571h2v1h-2zM633 571h2v1h-2zM638 571h2v1h-2zM643 571h2v1h-2zM648 571h2v1h-2zM653 571h2v1h-2zM658 571h2v1h-2zM663 571h2v1h-2zM668 571h2v1h-2zM673 571h2v1h-2zM678 571h2v1h-2zM683 571h2v1h-2zM688 571h2v1h-2zM693 571h2v1h-2zM698 571h2v1h-2zM703 571h2v1h-2zM708 571h2v1h-2zM713 571h2v1h-2zM718 571h2v1h-2zM723 571h2v1h-2zM728 571h2v1h-2zM733 571h2v1h-2zM738 571h2v1h-2zM743 571h2v1h-2zM748 571h2v1h-2zM753 571h2v1h-2zM758 571h2v1h-2zM763 571h2v1h-2zM768 571h2v1h-2zM773 571h2v1h-2zM778 571h2v1h-2zM783 571h2v1h-2zM788 571h2v1h-2zM793 571h2v1h-2zM798 571h2v1h-2zM803 571h2v1h-2zM808 571h2v1h-2zM813 571h2v1h-2zM818 571h2v1h-2zM823 571h2v1h-2zM828 571h2v1h-2zM833 571h2v1h-2zM838 571h2v1h-2zM843 571h2v1h-2zM848 571h2v1h-2zM853 571h2v1h-2zM858 571h2v1h-2zM863 571h2v1h-2zM868 571h2v1h-2zM873 571h2v1h-2zM878 571h2v1h-2zM883 571h2v1h-2zM888 571h2v1h-2zM893 571h2v1h-2zM898 571h2v1h-2zM903 571h2v1h-2zM908 571h2v1h-2zM913 571h2v1h-2zM918 571h2v1h-2zM923 571h2v1h-2zM928 571h2v1h-2zM933 571h2v1h-2zM938 571h2v1h-2zM943 571h2v1h-2zM948 571h2v1h-2zM953 571h2v1h-2zM958 571h2v1h-2zM963 571h2v1h-2zM968 571h2v1h-2zM973 571h2v1h-2zM978 571h2v1h-2zM983 571h2v1h-2zM988 571h2v1h-2zM993 571h2v1h-2zM998 571h2v1h-2zM1003 571h2v1h-2zM1008 571h2v1h-2zM1013 571h2v1h-2zM1018 571h2v1h-2zM1023 571h2v1h-2zM1028 571h2v1h-2zM1033 571h2v1h-2zM1038 571h2v1h-2zM1043 571h2v1h-2zM1048 571h2v1h-2zM1053 571h2v1h-2zM1058 571h2v1h-2zM1063 571h2v1h-2zM1068 571h2v1h-2zM1073 571h2v1h-2zM1078 571h2v1h-2zM1083 571h2v1h-2zM1088 571h2v1h-2zM63 598h2v1h-2zM68 598h2v1h-2zM73 598h2v1h-2zM78 598h2v1h-2zM83 598h2v1h-2zM88 598h2v1h-2zM93 598h2v1h-2zM98 598h2v1h-2zM103 598h2v1h-2zM108 598h2v1h-2zM113 598h2v1h-2zM118 598h2v1h-2zM123 598h2v1h-2zM128 598h2v1h-2zM133 598h2v1h-2zM138 598h2v1h-2zM143 598h2v1h-2zM148 598h2v1h-2zM153 598h2v1h-2zM158 598h2v1h-2zM163 598h2v1h-2zM168 598h2v1h-2zM173 598h2v1h-2zM178 598h2v1h-2zM183 598h2v1h-2zM188 598h2v1h-2zM193 598h2v1h-2zM198 598h2v1h-2zM203 598h2v1h-2zM208 598h2v1h-2zM213 598h2v1h-2zM218 598h2v1h-2zM223 598h2v1h-2zM228 598h2v1h-2zM233 598h2v1h-2zM238 598h2v1h-2zM243 598h2v1h-2zM248 598h2v1h-2zM253 598h2v1h-2zM258 598h2v1h-2zM263 598h2v1h-2zM268 598h2v1h-2zM273 598h2v1h-2zM278 598h2v1h-2zM283 598h2v1h-2zM288 598h2v1h-2zM293 598h2v1h-2zM298 598h2v1h-2zM303 598h2v1h-2zM308 598h2v1h-2zM313 598h2v1h-2zM318 598h2v1h-2zM323 598h2v1h-2zM328 598h2v1h-2zM333 598h2v1h-2zM338 598h2v1h-2zM343 598h2v1h-2zM348 598h2v1h-2zM353 598h2v1h-2zM358 598h2v1h-2zM363 598h2v1h-2zM368 598h2v1h-2zM373 598h2v1h-2zM378 598h2v1h-2zM383 598h2v1h-2zM388 598h2v1h-2zM393 598h2v1h-2zM398 598h2v1h-2zM403 598h2v1h-2zM408 598h2v1h-2zM413 598h2v1h-2zM418 598h2v1h-2zM423 598h2v1h-2zM428 598h2v1h-2zM433 598h2v1h-2zM438 598h2v1h-2zM443 598h2v1h-2zM448 598h2v1h-2zM453 598h2v1h-2zM458 598h2v1h-2zM463 598h2v1h-2zM468 598h2v1h-2zM473 598h2v1h-2zM478 598h2v1h-2zM483 598h2v1h-2zM488 598h2v1h-2zM493 598h2v1h-2zM498 598h2v1h-2zM503 598h2v1h-2zM508 598h2v1h-2zM513 598h2v1h-2zM518 598h2v1h-2zM523 598h2v1h-2zM528 598h2v1h-2zM533 598h2v1h-2zM538 598h2v1h-2zM543 598h2v1h-2zM548 598h2v1h-2zM553 598h2v1h-2zM558 598h2v1h-2zM563 598h2v1h-2zM568 598h2v1h-2zM573 598h2v1h-2zM578 598h2v1h-2zM583 598h2v1h-2zM588 598h2v1h-2zM593 598h2v1h-2zM598 598h2v1h-2zM603 598h2v1h-2zM608 598h2v1h-2zM613 598h2v1h-2zM618 598h2v1h-2zM623 598h2v1h-2zM628 598h2v1h-2zM633 598h2v1h-2zM638 598h2v1h-2zM643 598h2v1h-2zM648 598h2v1h-2zM653 598h2v1h-2zM658 598h2v1h-2zM663 598h2v1h-2zM668 598h2v1h-2zM673 598h2v1h-2zM678 598h2v1h-2zM683 598h2v1h-2zM688 598h2v1h-2zM693 598h2v1h-2zM698 598h2v1h-2zM703 598h2v1h-2zM708 598h2v1h-2zM713 598h2v1h-2zM718 598h2v1h-2zM723 598h2v1h-2zM728 598h2v1h-2zM733 598h2v1h-2zM738 598h2v1h-2zM743 598h2v1h-2zM748 598h2v1h-2zM753 598h2v1h-2zM758 598h2v1h-2zM763 598h2v1h-2zM768 598h2v1h-2zM773 598h2v1h-2zM778 598h2v1h-2zM783 598h2v1h-2zM788 598h2v1h-2zM793 598h2v1h-2zM798 598h2v1h-2zM803 598h2v1h-2zM808 598h2v1h-2zM813 598h2v1h-2zM818 598h2v1h-2zM823 598h2v1h-2zM828 598h2v1h-2zM833 598h2v1h-2zM838 598h2v1h-2zM843 598h2v1h-2zM848 598h2v1h-2zM853 598h2v1h-2zM858 598h2v1h-2zM863 598h2v1h-2zM868 598h2v1h-2zM873 598h2v1h-2zM878 598h2v1h-2zM883 598h2v1h-2zM888 598h2v1h-2zM893 598h2v1h-2zM898 598h2v1h-2zM903 598h2v1h-2zM908 598h2v1h-2zM913 598h2v1h-2zM918 598h2v1h-2zM923 598h2v1h-2zM928 598h2v1h-2zM933 598h2v1h-2zM938 598h2v1h-2zM943 598h2v1h-2zM948 598h2v1h-2zM953 598h2v1h-2zM958 598h2v1h-2zM963 598h2v1h-2zM968 598h2v1h-2zM973 598h2v1h-2zM978 598h2v1h-2zM983 598h2v1h-2zM988 598h2v1h-2zM993 598h2v1h-2zM998 598h2v1h-2zM1003 598h2v1h-2zM1008 598h2v1h-2zM1013 598h2v1h-2zM1018 598h2v1h-2zM1023 598h2v1h-2zM1028 598h2v1h-2zM1033 598h2v1h-2zM1038 598h2v1h-2zM1043 598h2v1h-2zM1048 598h2v1h-2zM1053 598h2v1h-2zM1058 598h2v1h-2zM1063 598h2v1h-2zM1068 598h2v1h-2zM1073 598h2v1h-2zM1078 598h2v1h-2zM1083 598h2v1h-2zM1088 598h2v1h-2zM63 626h2v1h-2zM68 626h2v1h-2zM73 626h2v1h-2zM78 626h2v1h-2zM83 626h2v1h-2zM88 626h2v1h-2zM93 626h2v1h-2zM98 626h2v1h-2zM103 626h2v1h-2zM108 626h2v1h-2zM113 626h2v1h-2zM118 626h2v1h-2zM123 626h2v1h-2zM128 626h2v1h-2zM133 626h2v1h-2zM138 626h2v1h-2zM143 626h2v1h-2zM148 626h2v1h-2zM153 626h2v1h-2zM158 626h2v1h-2zM163 626h2v1h-2zM168 626h2v1h-2zM173 626h2v1h-2zM178 626h2v1h-2zM183 626h2v1h-2zM188 626h2v1h-2zM193 626h2v1h-2zM198 626h2v1h-2zM203 626h2v1h-2zM208 626h2v1h-2zM213 626h2v1h-2zM218 626h2v1h-2zM223 626h2v1h-2zM228 626h2v1h-2zM233 626h2v1h-2zM238 626h2v1h-2zM243 626h2v1h-2zM248 626h2v1h-2zM253 626h2v1h-2zM258 626h2v1h-2zM263 626h2v1h-2zM268 626h2v1h-2zM273 626h2v1h-2zM278 626h2v1h-2zM283 626h2v1h-2zM288 626h2v1h-2zM293 626h2v1h-2zM298 626h2v1h-2zM303 626h2v1h-2zM308 626h2v1h-2zM313 626h2v1h-2zM318 626h2v1h-2zM323 626h2v1h-2zM328 626h2v1h-2zM333 626h2v1h-2zM338 626h2v1h-2zM343 626h2v1h-2zM348 626h2v1h-2zM353 626h2v1h-2zM358 626h2v1h-2zM363 626h2v1h-2zM368 626h2v1h-2zM373 626h2v1h-2zM378 626h2v1h-2zM383 626h2v1h-2zM388 626h2v1h-2zM393 626h2v1h-2zM398 626h2v1h-2zM403 626h2v1h-2zM408 626h2v1h-2zM413 626h2v1h-2zM418 626h2v1h-2zM423 626h2v1h-2zM428 626h2v1h-2zM433 626h2v1h-2zM438 626h2v1h-2zM443 626h2v1h-2zM448 626h2v1h-2zM453 626h2v1h-2zM458 626h2v1h-2zM463 626h2v1h-2zM468 626h2v1h-2zM473 626h2v1h-2zM478 626h2v1h-2zM483 626h2v1h-2zM488 626h2v1h-2zM493 626h2v1h-2zM498 626h2v1h-2zM503 626h2v1h-2zM508 626h2v1h-2zM513 626h2v1h-2zM518 626h2v1h-2zM523 626h2v1h-2zM528 626h2v1h-2zM533 626h2v1h-2zM538 626h2v1h-2zM543 626h2v1h-2zM548 626h2v1h-2zM553 626h2v1h-2zM558 626h2v1h-2zM563 626h2v1h-2zM568 626h2v1h-2zM573 626h2v1h-2zM578 626h2v1h-2zM583 626h2v1h-2zM588 626h2v1h-2zM593 626h2v1h-2zM598 626h2v1h-2zM603 626h2v1h-2zM608 626h2v1h-2zM613 626h2v1h-2zM618 626h2v1h-2zM623 626h2v1h-2zM628 626h2v1h-2zM633 626h2v1h-2zM638 626h2v1h-2zM643 626h2v1h-2zM648 626h2v1h-2zM653 626h2v1h-2zM658 626h2v1h-2zM663 626h2v1h-2zM668 626h2v1h-2zM673 626h2v1h-2zM678 626h2v1h-2zM683 626h2v1h-2zM688 626h2v1h-2zM693 626h2v1h-2zM698 626h2v1h-2zM703 626h2v1h-2zM708 626h2v1h-2zM713 626h2v1h-2zM718 626h2v1h-2zM723 626h2v1h-2zM728 626h2v1h-2zM733 626h2v1h-2zM738 626h2v1h-2zM743 626h2v1h-2zM748 626h2v1h-2zM753 626h2v1h-2zM758 626h2v1h-2zM763 626h2v1h-2zM768 626h2v1h-2zM773 626h2v1h-2zM778 626h2v1h-2zM783 626h2v1h-2zM788 626h2v1h-2zM793 626h2v1h-2zM798 626h2v1h-2zM803 626h2v1h-2zM808 626h2v1h-2zM813 626h2v1h-2zM818 626h2v1h-2zM823 626h2v1h-2zM828 626h2v1h-2zM833 626h2v1h-2zM838 626h2v1h-2zM843 626h2v1h-2zM848 626h2v1h-2zM853 626h2v1h-2zM858 626h2v1h-2zM863 626h2v1h-2zM868 626h2v1h-2zM873 626h2v1h-2zM878 626h2v1h-2zM883 626h2v1h-2zM888 626h2v1h-2zM893 626h2v1h-2zM898 626h2v1h-2zM903 626h2v1h-2zM908 626h2v1h-2zM913 626h2v1h-2zM918 626h2v1h-2zM923 626h2v1h-2zM928 626h2v1h-2zM933 626h2v1h-2zM938 626h2v1h-2zM943 626h2v1h-2zM948 626h2v1h-2zM953 626h2v1h-2zM958 626h2v1h-2zM963 626h2v1h-2zM968 626h2v1h-2zM973 626h2v1h-2zM978 626h2v1h-2zM983 626h2v1h-2zM988 626h2v1h-2zM993 626h2v1h-2zM998 626h2v1h-2zM1003 626h2v1h-2zM1008 626h2v1h-2zM1013 626h2v1h-2zM1018 626h2v1h-2zM1023 626h2v1h-2zM1028 626h2v1h-2zM1033 626h2v1h-2zM1038 626h2v1h-2zM1043 626h2v1h-2zM1048 626h2v1h-2zM1053 626h2v1h-2zM1058 626h2v1h-2zM1063 626h2v1h-2zM1068 626h2v1h-2zM1073 626h2v1h-2zM1078 626h2v1h-2zM1083 626h2v1h-2zM1088 626h2v1h-2zM63 653h2v1h-2zM68 653h2v1h-2zM73 653h2v1h-2zM78 653h2v1h-2zM83 653h2v1h-2zM88 653h2v1h-2zM93 653h2v1h-2zM98 653h2v1h-2zM103 653h2v1h-2zM108 653h2v1h-2zM113 653h2v1h-2zM118 653h2v1h-2zM123 653h2v1h-2zM128 653h2v1h-2zM133 653h2v1h-2zM138 653h2v1h-2zM143 653h2v1h-2zM148 653h2v1h-2zM153 653h2v1h-2zM158 653h2v1h-2zM163 653h2v1h-2zM168 653h2v1h-2zM173 653h2v1h-2zM178 653h2v1h-2zM183 653h2v1h-2zM188 653h2v1h-2zM193 653h2v1h-2zM198 653h2v1h-2zM203 653h2v1h-2zM208 653h2v1h-2zM213 653h2v1h-2zM218 653h2v1h-2zM223 653h2v1h-2zM228 653h2v1h-2zM233 653h2v1h-2zM238 653h2v1h-2zM243 653h2v1h-2zM248 653h2v1h-2zM253 653h2v1h-2zM258 653h2v1h-2zM263 653h2v1h-2zM268 653h2v1h-2zM273 653h2v1h-2zM278 653h2v1h-2zM283 653h2v1h-2zM288 653h2v1h-2zM293 653h2v1h-2zM298 653h2v1h-2zM303 653h2v1h-2zM308 653h2v1h-2zM313 653h2v1h-2zM318 653h2v1h-2zM323 653h2v1h-2zM328 653h2v1h-2zM333 653h2v1h-2zM338 653h2v1h-2zM343 653h2v1h-2zM348 653h2v1h-2zM353 653h2v1h-2zM358 653h2v1h-2zM363 653h2v1h-2zM368 653h2v1h-2zM373 653h2v1h-2zM378 653h2v1h-2zM383 653h2v1h-2zM388 653h2v1h-2zM393 653h2v1h-2zM398 653h2v1h-2zM403 653h2v1h-2zM408 653h2v1h-2zM413 653h2v1h-2zM418 653h2v1h-2zM423 653h2v1h-2zM428 653h2v1h-2zM433 653h2v1h-2zM438 653h2v1h-2zM443 653h2v1h-2zM448 653h2v1h-2zM453 653h2v1h-2zM458 653h2v1h-2zM463 653h2v1h-2zM468 653h2v1h-2zM473 653h2v1h-2zM478 653h2v1h-2zM483 653h2v1h-2zM488 653h2v1h-2zM493 653h2v1h-2zM498 653h2v1h-2zM503 653h2v1h-2zM508 653h2v1h-2zM513 653h2v1h-2zM518 653h2v1h-2zM523 653h2v1h-2zM528 653h2v1h-2zM533 653h2v1h-2zM538 653h2v1h-2zM543 653h2v1h-2zM548 653h2v1h-2zM553 653h2v1h-2zM558 653h2v1h-2zM563 653h2v1h-2zM568 653h2v1h-2zM573 653h2v1h-2zM578 653h2v1h-2zM583 653h2v1h-2zM588 653h2v1h-2zM593 653h2v1h-2zM598 653h2v1h-2zM603 653h2v1h-2zM608 653h2v1h-2zM613 653h2v1h-2zM618 653h2v1h-2zM623 653h2v1h-2zM628 653h2v1h-2zM633 653h2v1h-2zM638 653h2v1h-2zM643 653h2v1h-2zM648 653h2v1h-2zM653 653h2v1h-2zM658 653h2v1h-2zM663 653h2v1h-2zM668 653h2v1h-2zM673 653h2v1h-2zM678 653h2v1h-2zM683 653h2v1h-2zM688 653h2v1h-2zM693 653h2v1h-2zM698 653h2v1h-2zM703 653h2v1h-2zM708 653h2v1h-2zM713 653h2v1h-2zM718 653h2v1h-2zM723 653h2v1h-2zM728 653h2v1h-2zM733 653h2v1h-2zM738 653h2v1h-2zM743 653h2v1h-2zM748 653h2v1h-2zM753 653h2v1h-2zM758 653h2v1h-2zM763 653h2v1h-2zM768 653h2v1h-2zM773 653h2v1h-2zM778 653h2v1h-2zM783 653h2v1h-2zM788 653h2v1h-2zM793 653h2v1h-2zM798 653h2v1h-2zM803 653h2v1h-2zM808 653h2v1h-2zM813 653h2v1h-2zM818 653h2v1h-2zM823 653h2v1h-2zM828 653h2v1h-2zM833 653h2v1h-2zM838 653h2v1h-2zM843 653h2v1h-2zM848 653h2v1h-2zM853 653h2v1h-2zM858 653h2v1h-2zM863 653h2v1h-2zM868 653h2v1h-2zM873 653h2v1h-2zM878 653h2v1h-2zM883 653h2v1h-2zM888 653h2v1h-2zM893 653h2v1h-2zM898 653h2v1h-2zM903 653h2v1h-2zM908 653h2v1h-2zM913 653h2v1h-2zM918 653h2v1h-2zM923 653h2v1h-2zM928 653h2v1h-2zM933 653h2v1h-2zM938 653h2v1h-2zM943 653h2v1h-2zM948 653h2v1h-2zM953 653h2v1h-2zM958 653h2v1h-2zM963 653h2v1h-2zM968 653h2v1h-2zM973 653h2v1h-2zM978 653h2v1h-2zM983 653h2v1h-2zM988 653h2v1h-2zM993 653h2v1h-2zM998 653h2v1h-2zM1003 653h2v1h-2zM1008 653h2v1h-2zM1013 653h2v1h-2zM1018 653h2v1h-2zM1023 653h2v1h-2zM1028 653h2v1h-2zM1033 653h2v1h-2zM1038 653h2v1h-2zM1043 653h2v1h-2zM1048 653h2v1h-2zM1053 653h2v1h-2zM1058 653h2v1h-2zM1063 653h2v1h-2zM1068 653h2v1h-2zM1073 653h2v1h-2zM1078 653h2v1h-2zM1083 653h2v1h-2zM1088 653h2v1h-2zM63 680h2v1h-2zM68 680h2v1h-2zM73 680h2v1h-2zM78 680h2v1h-2zM83 680h2v1h-2zM88 680h2v1h-2zM93 680h2v1h-2zM98 680h2v1h-2zM103 680h2v1h-2zM108 680h2v1h-2zM113 680h2v1h-2zM118 680h2v1h-2zM123 680h2v1h-2zM128 680h2v1h-2zM133 680h2v1h-2zM138 680h2v1h-2zM143 680h2v1h-2zM148 680h2v1h-2zM153 680h2v1h-2zM158 680h2v1h-2zM163 680h2v1h-2zM168 680h2v1h-2zM173 680h2v1h-2zM178 680h2v1h-2zM183 680h2v1h-2zM188 680h2v1h-2zM193 680h2v1h-2zM198 680h2v1h-2zM203 680h2v1h-2zM208 680h2v1h-2zM213 680h2v1h-2zM218 680h2v1h-2zM223 680h2v1h-2zM228 680h2v1h-2zM233 680h2v1h-2zM238 680h2v1h-2zM243 680h2v1h-2zM248 680h2v1h-2zM253 680h2v1h-2zM258 680h2v1h-2zM263 680h2v1h-2zM268 680h2v1h-2zM273 680h2v1h-2zM278 680h2v1h-2zM283 680h2v1h-2zM288 680h2v1h-2zM293 680h2v1h-2zM298 680h2v1h-2zM303 680h2v1h-2zM308 680h2v1h-2zM313 680h2v1h-2zM318 680h2v1h-2zM323 680h2v1h-2zM328 680h2v1h-2zM333 680h2v1h-2zM338 680h2v1h-2zM343 680h2v1h-2zM348 680h2v1h-2zM353 680h2v1h-2zM358 680h2v1h-2zM363 680h2v1h-2zM368 680h2v1h-2zM373 680h2v1h-2zM378 680h2v1h-2zM383 680h2v1h-2zM388 680h2v1h-2zM393 680h2v1h-2zM398 680h2v1h-2zM403 680h2v1h-2zM408 680h2v1h-2zM413 680h2v1h-2zM418 680h2v1h-2zM423 680h2v1h-2zM428 680h2v1h-2zM433 680h2v1h-2zM438 680h2v1h-2zM443 680h2v1h-2zM448 680h2v1h-2zM453 680h2v1h-2zM458 680h2v1h-2zM463 680h2v1h-2zM468 680h2v1h-2zM473 680h2v1h-2zM478 680h2v1h-2zM483 680h2v1h-2zM488 680h2v1h-2zM493 680h2v1h-2zM498 680h2v1h-2zM503 680h2v1h-2zM508 680h2v1h-2zM513 680h2v1h-2zM518 680h2v1h-2zM523 680h2v1h-2zM528 680h2v1h-2zM533 680h2v1h-2zM538 680h2v1h-2zM543 680h2v1h-2zM548 680h2v1h-2zM553 680h2v1h-2zM558 680h2v1h-2zM563 680h2v1h-2zM568 680h2v1h-2zM573 680h2v1h-2zM578 680h2v1h-2zM583 680h2v1h-2zM588 680h2v1h-2zM593 680h2v1h-2zM598 680h2v1h-2zM603 680h2v1h-2zM608 680h2v1h-2zM613 680h2v1h-2zM618 680h2v1h-2zM623 680h2v1h-2zM628 680h2v1h-2zM633 680h2v1h-2zM638 680h2v1h-2zM643 680h2v1h-2zM648 680h2v1h-2zM653 680h2v1h-2zM658 680h2v1h-2zM663 680h2v1h-2zM668 680h2v1h-2zM673 680h2v1h-2zM678 680h2v1h-2zM683 680h2v1h-2zM688 680h2v1h-2zM693 680h2v1h-2zM698 680h2v1h-2zM703 680h2v1h-2zM708 680h2v1h-2zM713 680h2v1h-2zM718 680h2v1h-2zM723 680h2v1h-2zM728 680h2v1h-2zM733 680h2v1h-2zM738 680h2v1h-2zM743 680h2v1h-2zM748 680h2v1h-2zM753 680h2v1h-2zM758 680h2v1h-2zM763 680h2v1h-2zM768 680h2v1h-2zM773 680h2v1h-2zM778 680h2v1h-2zM783 680h2v1h-2zM788 680h2v1h-2zM793 680h2v1h-2zM798 680h2v1h-2zM803 680h2v1h-2zM808 680h2v1h-2zM813 680h2v1h-2zM818 680h2v1h-2zM823 680h2v1h-2zM828 680h2v1h-2zM833 680h2v1h-2zM838 680h2v1h-2zM843 680h2v1h-2zM848 680h2v1h-2zM853 680h2v1h-2zM858 680h2v1h-2zM863 680h2v1h-2zM868 680h2v1h-2zM873 680h2v1h-2zM878 680h2v1h-2zM883 680h2v1h-2zM888 680h2v1h-2zM893 680h2v1h-2zM898 680h2v1h-2zM903 680h2v1h-2zM908 680h2v1h-2zM913 680h2v1h-2zM918 680h2v1h-2zM923 680h2v1h-2zM928 680h2v1h-2zM933 680h2v1h-2zM938 680h2v1h-2zM943 680h2v1h-2zM948 680h2v1h-2zM953 680h2v1h-2zM958 680h2v1h-2zM963 680h2v1h-2zM968 680h2v1h-2zM973 680h2v1h-2zM978 680h2v1h-2zM983 680h2v1h-2zM988 680h2v1h-2zM993 680h2v1h-2zM998 680h2v1h-2zM1003 680h2v1h-2zM1008 680h2v1h-2zM1013 680h2v1h-2zM1018 680h2v1h-2zM1023 680h2v1h-2zM1028 680h2v1h-2zM1033 680h2v1h-2zM1038 680h2v1h-2zM1043 680h2v1h-2zM1048 680h2v1h-2zM1053 680h2v1h-2zM1058 680h2v1h-2zM1063 680h2v1h-2zM1068 680h2v1h-2zM1073 680h2v1h-2zM1078 680h2v1h-2zM1083 680h2v1h-2zM1088 680h2v1h-2zM164 435h1v2h-1zM164 440h1v2h-1zM164 445h1v2h-1zM164 450h1v2h-1zM164 455h1v2h-1zM164 460h1v2h-1zM164 465h1v2h-1zM164 470h1v2h-1zM164 475h1v2h-1zM164 480h1v2h-1zM164 485h1v2h-1zM164 490h1v2h-1zM164 495h1v2h-1zM164 500h1v2h-1zM164 505h1v2h-1zM164 510h1v2h-1zM164 515h1v2h-1zM164 520h1v2h-1zM164 525h1v2h-1zM164 530h1v2h-1zM164 535h1v2h-1zM164 540h1v2h-1zM164 545h1v2h-1zM164 550h1v2h-1zM164 555h1v2h-1zM164 560h1v2h-1zM164 565h1v2h-1zM164 570h1v2h-1zM164 575h1v2h-1zM164 580h1v2h-1zM164 585h1v2h-1zM164 590h1v2h-1zM164 595h1v2h-1zM164 600h1v2h-1zM164 605h1v2h-1zM164 610h1v2h-1zM164 615h1v2h-1zM164 620h1v2h-1zM164 625h1v2h-1zM164 630h1v2h-1zM164 635h1v2h-1zM164 640h1v2h-1zM164 645h1v2h-1zM164 650h1v2h-1zM164 655h1v2h-1zM164 660h1v2h-1zM164 665h1v2h-1zM164 670h1v2h-1zM164 675h1v2h-1zM164 680h1v2h-1zM164 685h1v2h-1zM164 690h1v2h-1zM164 695h1v2h-1zM164 700h1v2h-1zM164 705h1v2h-1zM267 435h1v2h-1zM267 440h1v2h-1zM267 445h1v2h-1zM267 450h1v2h-1zM267 455h1v2h-1zM267 460h1v2h-1zM267 465h1v2h-1zM267 470h1v2h-1zM267 475h1v2h-1zM267 480h1v2h-1zM267 485h1v2h-1zM267 490h1v2h-1zM267 495h1v2h-1zM267 500h1v2h-1zM267 505h1v2h-1zM267 510h1v2h-1zM267 515h1v2h-1zM267 520h1v2h-1zM267 525h1v2h-1zM267 530h1v2h-1zM267 535h1v2h-1zM267 540h1v2h-1zM267 545h1v2h-1zM267 550h1v2h-1zM267 555h1v2h-1zM267 560h1v2h-1zM267 565h1v2h-1zM267 570h1v2h-1zM267 575h1v2h-1zM267 580h1v2h-1zM267 585h1v2h-1zM267 590h1v2h-1zM267 595h1v2h-1zM267 600h1v2h-1zM267 605h1v2h-1zM267 610h1v2h-1zM267 615h1v2h-1zM267 620h1v2h-1zM267 625h1v2h-1zM267 630h1v2h-1zM267 635h1v2h-1zM267 640h1v2h-1zM267 645h1v2h-1zM267 650h1v2h-1zM267 655h1v2h-1zM267 660h1v2h-1zM267 665h1v2h-1zM267 670h1v2h-1zM267 675h1v2h-1zM267 680h1v2h-1zM267 685h1v2h-1zM267 690h1v2h-1zM267 695h1v2h-1zM267 700h1v2h-1zM267 705h1v2h-1zM370 435h1v2h-1zM370 440h1v2h-1zM370 445h1v2h-1zM370 450h1v2h-1zM370 455h1v2h-1zM370 460h1v2h-1zM370 465h1v2h-1zM370 470h1v2h-1zM370 475h1v2h-1zM370 480h1v2h-1zM370 485h1v2h-1zM370 490h1v2h-1zM370 495h1v2h-1zM370 500h1v2h-1zM370 505h1v2h-1zM370 510h1v2h-1zM370 515h1v2h-1zM370 520h1v2h-1zM370 525h1v2h-1zM370 530h1v2h-1zM370 535h1v2h-1zM370 540h1v2h-1zM370 545h1v2h-1zM370 550h1v2h-1zM370 555h1v2h-1zM370 560h1v2h-1zM370 565h1v2h-1zM370 570h1v2h-1zM370 575h1v2h-1zM370 580h1v2h-1zM370 585h1v2h-1zM370 590h1v2h-1zM370 595h1v2h-1zM370 600h1v2h-1zM370 605h1v2h-1zM370 610h1v2h-1zM370 615h1v2h-1zM370 620h1v2h-1zM370 625h1v2h-1zM370 630h1v2h-1zM370 635h1v2h-1zM370 640h1v2h-1zM370 645h1v2h-1zM370 650h1v2h-1zM370 655h1v2h-1zM370 660h1v2h-1zM370 665h1v2h-1zM370 670h1v2h-1zM370 675h1v2h-1zM370 680h1v2h-1zM370 685h1v2h-1zM370 690h1v2h-1zM370 695h1v2h-1zM370 700h1v2h-1zM370 705h1v2h-1zM473 435h1v2h-1zM473 440h1v2h-1zM473 445h1v2h-1zM473 450h1v2h-1zM473 455h1v2h-1zM473 460h1v2h-1zM473 465h1v2h-1zM473 470h1v2h-1zM473 475h1v2h-1zM473 480h1v2h-1zM473 485h1v2h-1zM473 490h1v2h-1zM473 495h1v2h-1zM473 500h1v2h-1zM473 505h1v2h-1zM473 510h1v2h-1zM473 515h1v2h-1zM473 520h1v2h-1zM473 525h1v2h-1zM473 530h1v2h-1zM473 535h1v2h-1zM473 540h1v2h-1zM473 545h1v2h-1zM473 550h1v2h-1zM473 555h1v2h-1zM473 560h1v2h-1zM473 565h1v2h-1zM473 570h1v2h-1zM473 575h1v2h-1zM473 580h1v2h-1zM473 585h1v2h-1zM473 590h1v2h-1zM473 595h1v2h-1zM473 600h1v2h-1zM473 605h1v2h-1zM473 610h1v2h-1zM473 615h1v2h-1zM473 620h1v2h-1zM473 625h1v2h-1zM473 630h1v2h-1zM473 635h1v2h-1zM473 640h1v2h-1zM473 645h1v2h-1zM473 650h1v2h-1zM473 655h1v2h-1zM473 660h1v2h-1zM473 665h1v2h-1zM473 670h1v2h-1zM473 675h1v2h-1zM473 680h1v2h-1zM473 685h1v2h-1zM473 690h1v2h-1zM473 695h1v2h-1zM473 700h1v2h-1zM473 705h1v2h-1zM577 435h1v2h-1zM577 440h1v2h-1zM577 445h1v2h-1zM577 450h1v2h-1zM577 455h1v2h-1zM577 460h1v2h-1zM577 465h1v2h-1zM577 470h1v2h-1zM577 475h1v2h-1zM577 480h1v2h-1zM577 485h1v2h-1zM577 490h1v2h-1zM577 495h1v2h-1zM577 500h1v2h-1zM577 505h1v2h-1zM577 510h1v2h-1zM577 515h1v2h-1zM577 520h1v2h-1zM577 525h1v2h-1zM577 530h1v2h-1zM577 535h1v2h-1zM577 540h1v2h-1zM577 545h1v2h-1zM577 550h1v2h-1zM577 555h1v2h-1zM577 560h1v2h-1zM577 565h1v2h-1zM577 570h1v2h-1zM577 575h1v2h-1zM577 580h1v2h-1zM577 585h1v2h-1zM577 590h1v2h-1zM577 595h1v2h-1zM577 600h1v2h-1zM577 605h1v2h-1zM577 610h1v2h-1zM577 615h1v2h-1zM577 620h1v2h-1zM577 625h1v2h-1zM577 630h1v2h-1zM577 635h1v2h-1zM577 640h1v2h-1zM577 645h1v2h-1zM577 650h1v2h-1zM577 655h1v2h-1zM577 660h1v2h-1zM577 665h1v2h-1zM577 670h1v2h-1zM577 675h1v2h-1zM577 680h1v2h-1zM577 685h1v2h-1zM577 690h1v2h-1zM577 695h1v2h-1zM577 700h1v2h-1zM577 705h1v2h-1zM680 435h1v2h-1zM680 440h1v2h-1zM680 445h1v2h-1zM680 450h1v2h-1zM680 455h1v2h-1zM680 460h1v2h-1zM680 465h1v2h-1zM680 470h1v2h-1zM680 475h1v2h-1zM680 480h1v2h-1zM680 485h1v2h-1zM680 490h1v2h-1zM680 495h1v2h-1zM680 500h1v2h-1zM680 505h1v2h-1zM680 510h1v2h-1zM680 515h1v2h-1zM680 520h1v2h-1zM680 525h1v2h-1zM680 530h1v2h-1zM680 535h1v2h-1zM680 540h1v2h-1zM680 545h1v2h-1zM680 550h1v2h-1zM680 555h1v2h-1zM680 560h1v2h-1zM680 565h1v2h-1zM680 570h1v2h-1zM680 575h1v2h-1zM680 580h1v2h-1zM680 585h1v2h-1zM680 590h1v2h-1zM680 595h1v2h-1zM680 600h1v2h-1zM680 605h1v2h-1zM680 610h1v2h-1zM680 615h1v2h-1zM680 620h1v2h-1zM680 625h1v2h-1zM680 630h1v2h-1zM680 635h1v2h-1zM680 640h1v2h-1zM680 645h1v2h-1zM680 650h1v2h-1zM680 655h1v2h-1zM680 660h1v2h-1zM680 665h1v2h-1zM680 670h1v2h-1zM680 675h1v2h-1zM680 680h1v2h-1zM680 685h1v2h-1zM680 690h1v2h-1zM680 695h1v2h-1zM680 700h1v2h-1zM680 705h1v2h-1zM783 435h1v2h-1zM783 440h1v2h-1zM783 445h1v2h-1zM783 450h1v2h-1zM783 455h1v2h-1zM783 460h1v2h-1zM783 465h1v2h-1zM783 470h1v2h-1zM783 475h1v2h-1zM783 480h1v2h-1zM783 485h1v2h-1zM783 490h1v2h-1zM783 495h1v2h-1zM783 500h1v2h-1zM783 505h1v2h-1zM783 510h1v2h-1zM783 515h1v2h-1zM783 520h1v2h-1zM783 525h1v2h-1zM783 530h1v2h-1zM783 535h1v2h-1zM783 540h1v2h-1zM783 545h1v2h-1zM783 550h1v2h-1zM783 555h1v2h-1zM783 560h1v2h-1zM783 565h1v2h-1zM783 570h1v2h-1zM783 575h1v2h-1zM783 580h1v2h-1zM783 585h1v2h-1zM783 590h1v2h-1zM783 595h1v2h-1zM783 600h1v2h-1zM783 605h1v2h-1zM783 610h1v2h-1zM783 615h1v2h-1zM783 620h1v2h-1zM783 625h1v2h-1zM783 630h1v2h-1zM783 635h1v2h-1zM783 640h1v2h-1zM783 645h1v2h-1zM783 650h1v2h-1zM783 655h1v2h-1zM783 660h1v2h-1zM783 665h1v2h-1zM783 670h1v2h-1zM783 675h1v2h-1zM783 680h1v2h-1zM783 685h1v2h-1zM783 690h1v2h-1zM783 695h1v2h-1zM783 700h1v2h-1zM783 705h1v2h-1zM886 435h1v2h-1zM886 440h1v2h-1zM886 445h1v2h-1zM886 450h1v2h-1zM886 455h1v2h-1zM886 460h1v2h-1zM886 465h1v2h-1zM886 470h1v2h-1zM886 475h1v2h-1zM886 480h1v2h-1zM886 485h1v2h-1zM886 490h1v2h-1zM886 495h1v2h-1zM886 500h1v2h-1zM886 505h1v2h-1zM886 510h1v2h-1zM886 515h1v2h-1zM886 520h1v2h-1zM886 525h1v2h-1zM886 530h1v2h-1zM886 535h1v2h-1zM886 540h1v2h-1zM886 545h1v2h-1zM886 550h1v2h-1zM886 555h1v2h-1zM886 560h1v2h-1zM886 565h1v2h-1zM886 570h1v2h-1zM886 575h1v2h-1zM886 580h1v2h-1zM886 585h1v2h-1zM886 590h1v2h-1zM886 595h1v2h-1zM886 600h1v2h-1zM886 605h1v2h-1zM886 610h1v2h-1zM886 615h1v2h-1zM886 620h1v2h-1zM886 625h1v2h-1zM886 630h1v2h-1zM886 635h1v2h-1zM886 640h1v2h-1zM886 645h1v2h-1zM886 650h1v2h-1zM886 655h1v2h-1zM886 660h1v2h-1zM886 665h1v2h-1zM886 670h1v2h-1zM886 675h1v2h-1zM886 680h1v2h-1zM886 685h1v2h-1zM886 690h1v2h-1zM886 695h1v2h-1zM886 700h1v2h-1zM886 705h1v2h-1zM989 435h1v2h-1zM989 440h1v2h-1zM989 445h1v2h-1zM989 450h1v2h-1zM989 455h1v2h-1zM989 460h1v2h-1zM989 465h1v2h-1zM989 470h1v2h-1zM989 475h1v2h-1zM989 480h1v2h-1zM989 485h1v2h-1zM989 490h1v2h-1zM989 495h1v2h-1zM989 500h1v2h-1zM989 505h1v2h-1zM989 510h1v2h-1zM989 515h1v2h-1zM989 520h1v2h-1zM989 525h1v2h-1zM989 530h1v2h-1zM989 535h1v2h-1zM989 540h1v2h-1zM989 545h1v2h-1zM989 550h1v2h-1zM989 555h1v2h-1zM989 560h1v2h-1zM989 565h1v2h-1zM989 570h1v2h-1zM989 575h1v2h-1zM989 580h1v2h-1zM989 585h1v2h-1zM989 590h1v2h-1zM989 595h1v2h-1zM989 600h1v2h-1zM989 605h1v2h-1zM989 610h1v2h-1zM989 615h1v2h-1zM989 620h1v2h-1zM989 625h1v2h-1zM989 630h1v2h-1zM989 635h1v2h-1zM989 640h1v2h-1zM989 645h1v2h-1zM989 650h1v2h-1zM989 655h1v2h-1zM989 660h1v2h-1zM989 665h1v2h-1zM989 670h1v2h-1zM989 675h1v2h-1zM989 680h1v2h-1zM989 685h1v2h-1zM989 690h1v2h-1zM989 695h1v2h-1zM989 700h1v2h-1zM989 705h1v2h-1zM1093 435h1v2h-1zM1093 440h1v2h-1zM1093 445h1v2h-1zM1093 450h1v2h-1zM1093 455h1v2h-1zM1093 460h1v2h-1zM1093 465h1v2h-1zM1093 470h1v2h-1zM1093 475h1v2h-1zM1093 480h1v2h-1zM1093 485h1v2h-1zM1093 490h1v2h-1zM1093 495h1v2h-1zM1093 500h1v2h-1zM1093 505h1v2h-1zM1093 510h1v2h-1zM1093 515h1v2h-1zM1093 520h1v2h-1zM1093 525h1v2h-1zM1093 530h1v2h-1zM1093 535h1v2h-1zM1093 540h1v2h-1zM1093 545h1v2h-1zM1093 550h1v2h-1zM1093 555h1v2h-1zM1093 560h1v2h-1zM1093 565h1v2h-1zM1093 570h1v2h-1zM1093 575h1v2h-1zM1093 580h1v2h-1zM1093 585h1v2h-1zM1093 590h1v2h-1zM1093 595h1v2h-1zM1093 600h1v2h-1zM1093 605h1v2h-1zM1093 610h1v2h-1zM1093 615h1v2h-1zM1093 620h1v2h-1zM1093 625h1v2h-1zM1093 630h1v2h-1zM1093 635h1v2h-1zM1093 640h1v2h-1zM1093 645h1v2h-1zM1093 650h1v2h-1zM1093 655h1v2h-1zM1093 660h1v2h-1zM1093 665h1v2h-1zM1093 670h1v2h-1zM1093 675h1v2h-1zM1093 680h1v2h-1zM1093 685h1v2h-1zM1093 690h1v2h-1zM1093 695h1v2h-1zM1093 700h1v2h-1zM1093 705h1v2h-1z"/>
<rect x="61" y="435" width="1" height="274" fill="#bcc4d0"/>
<rect x="58" y="708" width="1036" height="1" fill="#bcc4d0"/>
<rect x="58" y="435" width="5" height="1" fill="#bcc4d0"/>
<text x="53.8" y="441" text-anchor="end" font-family="Liberation Sans" font-size="12" fill="#000">40</text>
<rect x="58" y="462" width="5" height="1" fill="#bcc4d0"/>
<text x="53.8" y="468" text-anchor="end" font-family="Liberation Sans" font-size="12" fill="#000">36</text>
<rect x="58" y="489" width="5" height="1" fill="#bcc4d0"/>
<text x="53.8" y="495" text-anchor="end" font-family="Liberation Sans" font-size="12" fill="#000">32</text>
<rect x="58" y="516" width="5" height="1" fill="#bcc4d0"/>
<text x="53.8" y="522" text-anchor="end" font-family="Liberation Sans" font-size="12" fill="#000">28</text>
<rect x="58" y="544" width="5" height="1" fill="#bcc4d0"/>
<text x="53.8" y="550" text-anchor="end" font-family="Liberation Sans" font-size="12" fill="#000">24</text>
<rect x="58" y="571" width="5" height="1" fill="#bcc4d0"/>
<text x="53.8" y="577" text-anchor="end" font-family="Liberation Sans" font-size="12" fill="#000">20</text>
<rect x="58" y="598" width="5" height="1" fill="#bcc4d0"/>
<text x="53.8" y="604" text-anchor="end" font-family="Liberation Sans" font-size="12" fill="#000">16</text>
<rect x="58" y="626" width="5" height="1" fill="#bcc4d0"/>
<text x="53.8" y="632" text-anchor="end" font-family="Liberation Sans" font-size="12" fill="#000">12</text>
<rect x="58" y="653" width="5" height="1" fill="#bcc4d0"/>
<text x="53.8" y="659" text-anchor="end" font-family="Liberation Sans" font-size="12" fill="#000">8</text>
<rect x="58" y="680" width="5" height="1" fill="#bcc4d0"/>
<text x="53.8" y="686" text-anchor="end" font-family="Liberation Sans" font-size="12" fill="#000">4</text>
<rect x="58" y="708" width="5" height="1" fill="#bcc4d0"/>
<text x="53.8" y="714" text-anchor="end" font-family="Liberation Sans" font-size="12" fill="#000">0</text>
<rect x="61" y="709" width="1" height="3" fill="#bcc4d0"/>
<text x="61" y="726" text-anchor="middle" font-family="Liberation Sans" font-size="12" fill="#000">00:00:00</text>
<rect x="164" y="709" width="1" height="3" fill="#bcc4d0"/>
<text x="164" y="726" text-anchor="middle" font-family="Liberation Sans" font-size="12" fill="#000">00:04:02</text>
<rect x="267" y="709" width="1" height="3" fill="#bcc4d0"/>
<text x="267" y="726" text-anchor="middle" font-family="Liberation Sans" font-size="12" fill="#000">00:08:05</text>
<rect x="370" y="709" width="1" height="3" fill="#bcc4d0"/>
<text x="370" y="726" text-anchor="middle" font-family="Liberation Sans" font-size="12" fill="#000">00:12:08</text>
<rect x="473" y="709" width="1" height="3" fill="#bcc4d0"/>
<text x="473" y="726" text-anchor="middle" font-family="Liberation Sans" font-size="12" fill="#000">00:16:10</text>
<rect x="577" y="709" width="1" height="3" fill="#bcc4d0"/>
<text x="577" y="726" text-anchor="middle" font-family="Liberation Sans" font-size="12" fill="#000">00:20:13</text>
<rect x="680" y="709" width="1" height="3" fill="#bcc4d0"/>
<text x="680" y="726" text-anchor="middle" font-family="Liberation Sans" font-size="12" fill="#000">00:24:16</text>
<rect x="783" y="709" width="1" height="3" fill="#bcc4d0"/>
<text x="783" y="726" text-anchor="middle" font-family="Liberation Sans" font-size="12" fill="#000">00:28:18</text>
<rect x="886" y="709" width="1" height="3" fill="#bcc4d0"/>
<text x="886" y="726" text-anchor="middle" font-family="Liberation Sans" font-size="12" fill="#000">00:32:21</text>
<rect x="989" y="709" width="1" height="3" fill="#bcc4d0"/>
<text x="989" y="726" text-anchor="middle" font-family="Liberation Sans" font-size="12" fill="#000">00:36:24</text>
<rect x="1093" y="709" width="1" height="3" fill="#bcc4d0"/>
<text x="1093" y="726" text-anchor="middle" font-family="Liberation Sans" font-size="12" fill="#000">00:40:27</text>
<text x="577.5" y="741.7" text-anchor="middle" font-family="Liberation Sans" font-size="12" font-style="italic" fill="#000">Elapsed time</text>
<text transform="translate(32.3,570.3) rotate(-90)" text-anchor="middle" font-family="Liberation Sans" font-size="12" font-style="italic" letter-spacing="0.1" fill="#000">Number of active threads</text>
<polyline fill="none" stroke="#ff0000" stroke-width="3" stroke-linejoin="round" points="61.5,708.5 61.5,675 62.4,673 62.4,640.5 318.5,640.5 318.5,614 319.5,612 319.5,580 320.5,578 320.5,572.5 575.3,572.5 575.3,553 576.3,551 576.3,524 577.3,522 577.3,504.5 832.6,504.5 832.6,491 833.5,489 833.5,464 834.3,462 834.3,435.5 1090.5,435.5 1090.5,538 1091,540 1091,606 1091.5,608 1091.6,662 1093.4,708.5"/>
</svg>
</body></html>
